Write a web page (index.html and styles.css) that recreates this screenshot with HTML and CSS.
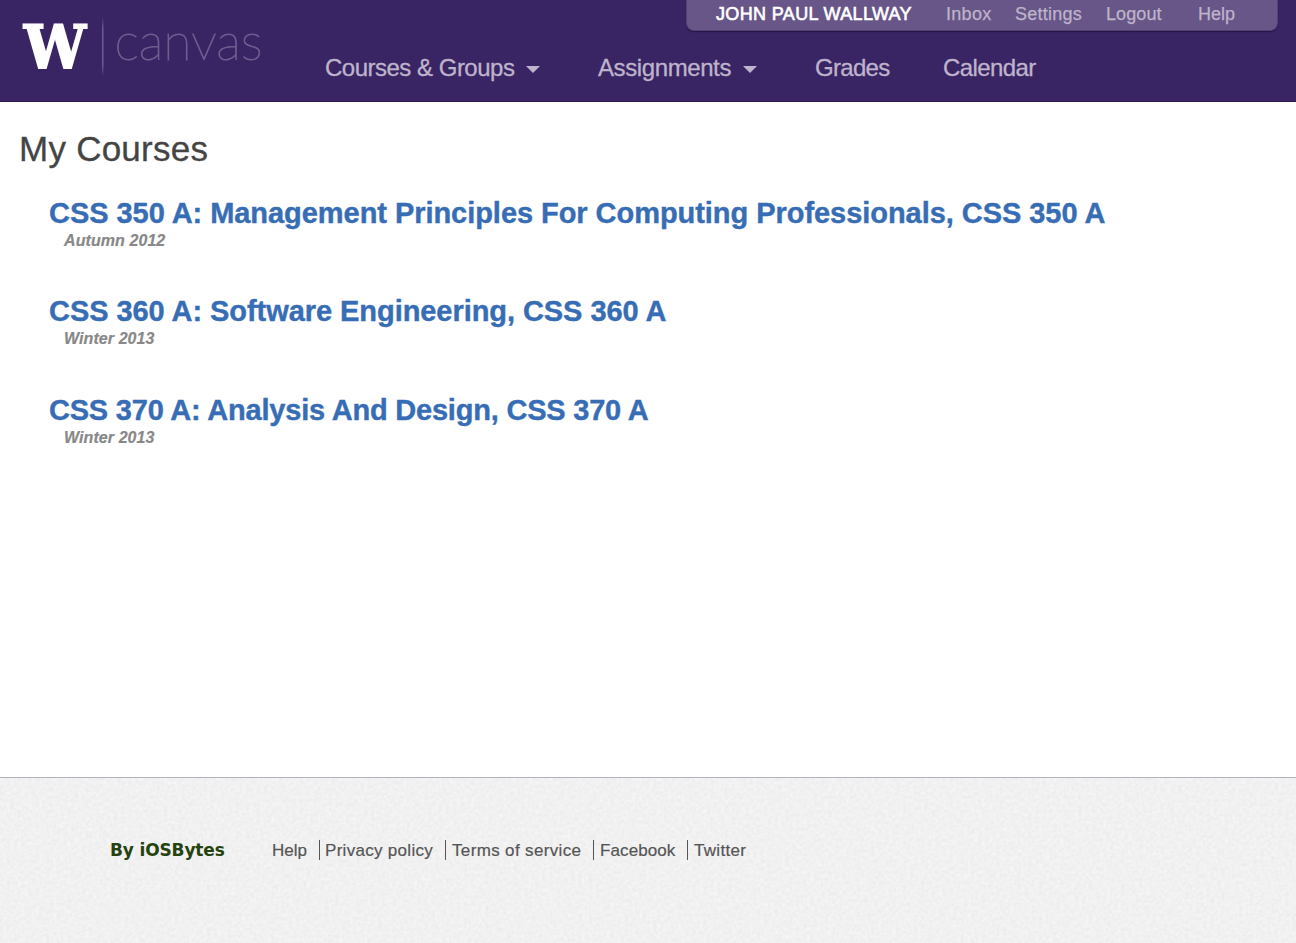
FILE: index.html
```html
<!DOCTYPE html>
<html lang="en">
<head>
<meta charset="utf-8">
<title>My Courses</title>
<link rel="stylesheet" href="styles.css">
</head>
<body>
<header class="header">
  <a class="brand">
    <svg width="290" height="101" viewBox="0 0 290 101">
      <defs>
        <linearGradient id="rule" x1="0" y1="0" x2="0" y2="1">
          <stop offset="0" stop-color="#6d5c8e" stop-opacity="0"/>
          <stop offset=".2" stop-color="#6d5c8e"/>
          <stop offset=".8" stop-color="#6d5c8e"/>
          <stop offset="1" stop-color="#6d5c8e" stop-opacity="0"/>
        </linearGradient>
      </defs>
      <text class="brand-w" x="24" y="68" textLength="62" lengthAdjust="spacingAndGlyphs">W</text>
      <rect x="102" y="17" width="1.500" height="60" fill="url(#rule)"/>
      <text class="brand-name" x="114.500" y="60" textLength="148" lengthAdjust="spacingAndGlyphs">canvas</text>
    </svg>
  </a>
  <div class="menus">
    <ul class="identity">
      <li class="user">JOHN PAUL WALLWAY</li>
      <li class="inbox">Inbox</li>
      <li class="settings">Settings</li>
      <li class="logout">Logout</li>
      <li>Help</li>
    </ul>
    <nav class="nav">
      <a class="nav-courses">Courses &amp; Groups<span class="caret"></span></a>
      <a class="nav-assignments">Assignments<span class="caret"></span></a>
      <a class="nav-grades">Grades</a>
      <a class="nav-calendar">Calendar</a>
    </nav>
  </div>
</header>
<main class="main">
  <h1 class="title">My Courses</h1>
  <ul class="courses">
    <li class="course"><a class="course-name management">CSS 350 A: Management Principles For Computing Professionals, CSS 350 A</a><span class="term">Autumn 2012</span></li>
    <li class="course"><a class="course-name engineering">CSS 360 A: Software Engineering, CSS 360 A</a><span class="term">Winter 2013</span></li>
    <li class="course"><a class="course-name analysis">CSS 370 A: Analysis And Design, CSS 370 A</a><span class="term">Winter 2013</span></li>
  </ul>
</main>
<footer class="footer">
  <svg class="texture" width="100%" height="100%">
    <filter id="paper" x="0" y="0" width="100%" height="100%" color-interpolation-filters="sRGB">
      <feTurbulence type="fractalNoise" baseFrequency=".28" numOctaves="3" seed="4"/>
      <feColorMatrix type="matrix" values=".06 0 0 0 .914  .06 0 0 0 .914  .06 0 0 0 .914  0 0 0 0 1"/>
    </filter>
    <rect width="100%" height="100%" filter="url(#paper)"/>
  </svg>
  <strong class="by">By iOSBytes</strong>
  <div class="links">
    <a class="l-help">Help</a>
    <a class="l-privacy">Privacy policy</a>
    <a class="l-terms">Terms of service</a>
    <a class="l-facebook">Facebook</a>
    <a class="l-twitter">Twitter</a>
  </div>
</footer>
</body>
</html>
```
FILE: styles.css
```css
* { box-sizing: border-box; }
body {
  margin: 0;
  height: 943px;
  display: flex;
  flex-direction: column;
  overflow: hidden;
  background: #fff;
  font-family: "Liberation Sans", Arial, sans-serif;
  white-space: nowrap;
}
ul { list-style: none; margin: 0; padding: 0; }
.header {
  display: flex;
  height: 102px;
  background: #392464;
  border-bottom: 1px solid #2c1955;
}
.brand { width: 325px; }
.brand svg { display: block; }
.brand-w {
  font: bold 59px "DejaVu Serif", serif;
  fill: #fff;
  stroke: #fff;
  stroke-width: 2px;
}
.brand-name {
  font: 100 52px Lato, sans-serif;
  fill: #6d5c8e;
  stroke: #6d5c8e;
  stroke-width: 1px;
}
.menus { flex: 1; display: flex; flex-direction: column; }
.identity {
  flex: none;
  align-self: flex-end;
  display: flex;
  width: 592px;
  height: 31px;
  margin-right: 18px;
  padding-left: 29px;
  border: 1px solid #534276;
  border-top: 0;
  border-radius: 0 0 8px 8px;
  background: #675687;
  box-shadow: 0 1px 1px #241445;
  color: #beb4cb;
  font-size: 18px;
  line-height: 28px;
  -webkit-text-stroke: .25px #beb4cb;
}
.user { width: 230px; color: #fff; -webkit-text-stroke: .6px #fff; letter-spacing: .35px; }
.inbox { width: 69px; letter-spacing: .3px; }
.settings { width: 91px; letter-spacing: .25px; }
.logout { width: 92px; letter-spacing: .1px; }
.nav { display: flex; color: #beb4cb; font-size: 24px; line-height: 74px; letter-spacing: -.5px; -webkit-text-stroke: .3px #beb4cb; }
.nav-courses { width: 273px; }
.nav-assignments { width: 217px; letter-spacing: -.4px; }
.nav-grades { width: 128px; letter-spacing: -.7px; }
.nav-calendar { letter-spacing: -.6px; }
.caret {
  display: inline-block;
  margin-left: 12px;
  vertical-align: 3px;
  border: 7px solid transparent;
  border-top: 7px solid #beb4cb;
  border-bottom: 0;
}
.main { height: 675px; padding: 25px 20px 0 19px; }
.title { margin: 0; color: #444; font-size: 35px; font-weight: normal; line-height: 43px; letter-spacing: .25px; -webkit-text-stroke: .3px #444; }
.courses { padding: 24px 0 0 30px; }
.course { display: flex; flex-direction: column; height: 98.400px; }
.course-name { color: #376db5; font-size: 29px; font-weight: bold; line-height: 38px; letter-spacing: -.05px; -webkit-text-stroke: .4px #376db5; }
.engineering { letter-spacing: -.06px; }
.analysis { letter-spacing: -.21px; }
.term { padding-left: 15px; color: #888; font-size: 16px; font-style: italic; font-weight: bold; line-height: 18px; letter-spacing: .08px; -webkit-text-stroke: .2px #888; }
.footer {
  position: relative;
  display: flex;
  height: 166px;
  padding-left: 110px;
  border-top: 1px solid #b1b5bb;
  background: #efefef;
}
.texture { position: absolute; inset: 0; }
.by, .links { position: relative; }
.by { width: 162px; color: #26420f; font: bold 17px/20px "DejaVu Sans", sans-serif; letter-spacing: -.15px; padding-top: 62px; }
.links { display: flex; padding-top: 62px; color: #555; font-size: 17px; line-height: 20px; -webkit-text-stroke: .2px #555; }
.links a { height: 20px; line-height: 21px; }
.links a + a { border-left: 1px solid #555; padding-left: 6px; }
.l-help { width: 47px; }
.links .l-privacy { width: 126px; padding-left: 5px; letter-spacing: .3px; }
.l-terms { width: 148px; letter-spacing: .35px; }
.l-facebook { width: 94px; letter-spacing: .1px; }
.l-twitter { letter-spacing: .3px; }
```
